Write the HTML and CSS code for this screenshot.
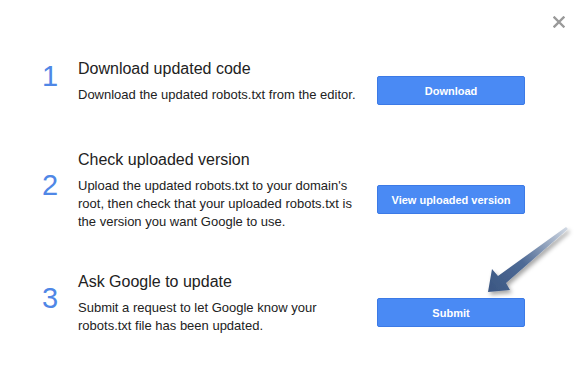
FILE: index.html
```html
<!DOCTYPE html>
<html lang="en">
<head>
    <meta charset="UTF-8">
    <title>Submit updated robots.txt</title>
    <link rel="stylesheet" href="styles.css">
</head>

<body>

    <div class="dialog">
        <button class="close" aria-label="Close">
            <svg width="12" height="12" viewBox="0 0 12 12">
                <path d="M1.5 1.5 L10.5 10.5 M10.5 1.5 L1.5 10.5" stroke="#9a9a9a" stroke-width="2.4" stroke-linecap="square"/>
            </svg>
        </button>

        <div class="step step-download">
            <div class="step-num">1</div>
            <div class="step-text">
                <div class="step-title">Download updated code</div>
                <div class="step-desc">Download the updated robots.txt from the editor.</div>
            </div>
            <button class="step-button">Download</button>
        </div>

        <div class="step step-check">
            <div class="step-num">2</div>
            <div class="step-text">
                <div class="step-title">Check uploaded version</div>
                <div class="step-desc">Upload the updated robots.txt to your domain's root, then check that your uploaded robots.txt is the version you want Google to use.</div>
            </div>
            <button class="step-button">View uploaded version</button>
        </div>

        <div class="step step-submit">
            <div class="step-num">3</div>
            <div class="step-text">
                <div class="step-title">Ask Google to update</div>
                <div class="step-desc">Submit a request to let Google know your robots.txt file has been updated.</div>
            </div>
            <button class="step-button">Submit</button>
        </div>

        <svg class="pointer" width="100" height="85" viewBox="0 0 100 85">
            <defs>
                <linearGradient id="arrowFill" x1="8" y1="72" x2="88" y2="8" gradientUnits="userSpaceOnUse">
                    <stop offset="0" stop-color="#3a5682"/>
                    <stop offset="0.45" stop-color="#4f6b96"/>
                    <stop offset="1" stop-color="#d3dae4"/>
                </linearGradient>
                <filter id="arrowShadow" x="-20%" y="-20%" width="150%" height="150%">
                    <feDropShadow dx="2" dy="3" stdDeviation="2" flood-color="#000" flood-opacity="0.35"/>
                </filter>
            </defs>
            <polygon points="8,72 12,49 18,56 86,7 88,9 26,63 30,70" fill="url(#arrowFill)" filter="url(#arrowShadow)"/>
        </svg>
    </div>

</body>
</html>
```

FILE: styles.css
```css
body {
    margin: 0;
    font-family: 'Liberation Sans', Arial, sans-serif;
    background-color: #fff;
    color: #222;
}
.dialog {
    position: relative;
    width: 582px;
    height: 373px;
    padding: 59px 0 0 42px;
    box-sizing: border-box;
    background: #fff;
}
.close {
    position: absolute;
    top: 16px;
    right: 16px;
    width: 14px;
    height: 14px;
    padding: 0;
    border: none;
    background: none;
    cursor: pointer;
}
.step {
    display: flex;
    align-items: center;
}
.step-check {
    margin-top: 46px;
}
.step-submit {
    margin-top: 41px;
}
.step-num {
    width: 36px;
    font-size: 29px;
    line-height: 29px;
    color: #4f87e6;
    margin-bottom: 11px;
}
.step-text {
    width: 282px;
}
.step-title {
    font-size: 16px;
    line-height: 20px;
    color: #222;
}
.step-desc {
    margin-top: 7px;
    font-size: 13px;
    line-height: 18px;
    color: #222;
}
.step-button {
    width: 148px;
    height: 29px;
    margin: 9px 0 -9px 17px;
    padding: 0;
    background-color: #4a8af4;
    border: 1px solid #3c7ae6;
    border-radius: 2px;
    color: #fff;
    font-family: 'Liberation Sans', Arial, sans-serif;
    font-size: 11px;
    font-weight: bold;
    cursor: pointer;
}
.pointer {
    position: absolute;
    left: 480px;
    top: 220px;
}
```
